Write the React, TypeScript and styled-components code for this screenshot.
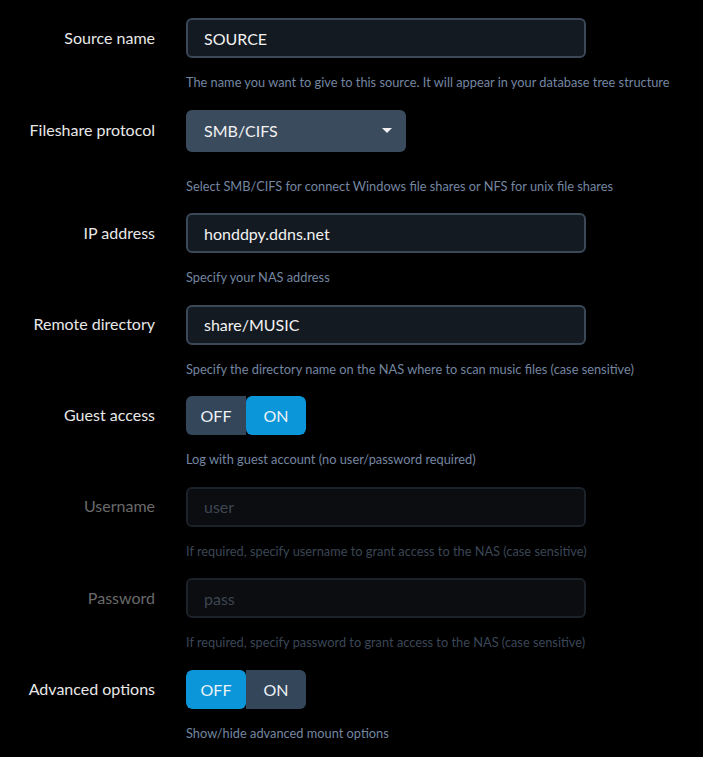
import React from "react";
import styled, { createGlobalStyle, css } from "styled-components";

const Global = createGlobalStyle`
  html, body { margin: 0; padding: 0; background: #000; }
  body { font-family: Lato, "Open Sans", sans-serif; }
`;

const Form = styled.div`
  padding-top: 18px;
  display: grid;
  grid-template-columns: 155px 1fr;
  column-gap: 31px;
  align-items: start;
`;

const Label = styled.div<{ $disabled?: boolean; $h?: number }>`
  height: ${(p) => p.$h ?? 40}px;
  display: flex;
  align-items: center;
  justify-content: flex-end;
  font-size: 16px;
  color: ${(p) => (p.$disabled ? "#6a6a6a" : "#e8e8e8")};
  white-space: nowrap;
  margin-top: -1px;
`;

const Field = styled.div`
  display: flex;
  flex-direction: column;
  align-items: flex-start;
`;

const Input = styled.input<{ $disabled?: boolean }>`
  box-sizing: border-box;
  width: 400px;
  height: 40px;
  border-radius: 6px;
  border: 2px solid ${(p) => (p.$disabled ? "#1c2229" : "#3a4858")};
  background: ${(p) => (p.$disabled ? "#0b0d10" : "#141a21")};
  color: #f2f2f2;
  font-family: Lato, sans-serif;
  font-size: 16px;
  padding: 0 16px;
  outline: none;
  &::placeholder { color: #3e4652; }
`;

const Select = styled.div`
  box-sizing: border-box;
  width: 220px;
  height: 42px;
  margin-bottom: 10px;
  border-radius: 6px;
  background: #3a4b5e;
  color: #f2f2f2;
  font-size: 16px;
  padding: 0 12px 0 18px;
  display: flex;
  align-items: center;
  justify-content: space-between;
`;

const Caret = styled.span`
  width: 0;
  height: 0;
  border-left: 5px solid transparent;
  border-right: 5px solid transparent;
  border-top: 5px solid #f0f0f0;
  margin-right: 2px;
`;

const Toggle = styled.div`
  display: flex;
  height: 39px;
  border-radius: 6px;
  overflow: hidden;
`;

const Seg = styled.div<{ $on: boolean }>`
  width: 60px;
  display: flex;
  align-items: center;
  justify-content: center;
  font-size: 16px;
  color: #eef2f6;
  ${(p) =>
    p.$on
      ? css`background: #0a96d8; border-radius: 6px;`
      : css`background: #34465a;`}
`;

const Help = styled.div<{ $disabled?: boolean }>`
  margin-top: 16px;
  margin-bottom: 19.5px;
  line-height: 16px;
  font-size: 12.8px;
  color: ${(p) => (p.$disabled ? "#3b4656" : "#7486a0")};
  white-space: nowrap;
`;

type Row =
  | { kind: "input"; label: string; value?: string; placeholder?: string; disabled?: boolean; help: string }
  | { kind: "select"; label: string; value: string; help: string }
  | { kind: "toggle"; label: string; on: boolean; help: string };

const rows: Row[] = [
  { kind: "input", label: "Source name", value: "SOURCE", help: "The name you want to give to this source. It will appear in your database tree structure" },
  { kind: "select", label: "Fileshare protocol", value: "SMB/CIFS", help: "Select SMB/CIFS for connect Windows file shares or NFS for unix file shares" },
  { kind: "input", label: "IP address", value: "honddpy.ddns.net", help: "Specify your NAS address" },
  { kind: "input", label: "Remote directory", value: "share/MUSIC", help: "Specify the directory name on the NAS where to scan music files (case sensitive)" },
  { kind: "toggle", label: "Guest access", on: true, help: "Log with guest account (no user/password required)" },
  { kind: "input", label: "Username", placeholder: "user", disabled: true, help: "If required, specify username to grant access to the NAS (case sensitive)" },
  { kind: "input", label: "Password", placeholder: "pass", disabled: true, help: "If required, specify password to grant access to the NAS (case sensitive)" },
  { kind: "toggle", label: "Advanced options", on: false, help: "Show/hide advanced mount options" },
];

export default function App() {
  return (
    <>
      <Global />
      <Form>
        {rows.map((r) => {
          const disabled = r.kind === "input" && !!r.disabled;
          return (
            <React.Fragment key={r.label}>
              <Label $disabled={disabled} $h={r.kind === "select" ? 42 : r.kind === "toggle" ? 39 : 40}>
                {r.label}
              </Label>
              <Field>
                {r.kind === "input" && (
                  <Input
                    $disabled={r.disabled}
                    disabled={r.disabled}
                    defaultValue={r.value}
                    placeholder={r.placeholder}
                  />
                )}
                {r.kind === "select" && (
                  <Select>
                    {r.value}
                    <Caret />
                  </Select>
                )}
                {r.kind === "toggle" && (
                  <Toggle>
                    <Seg $on={!r.on}>OFF</Seg>
                    <Seg $on={r.on}>ON</Seg>
                  </Toggle>
                )}
                <Help $disabled={disabled}>{r.help}</Help>
              </Field>
            </React.Fragment>
          );
        })}
      </Form>
    </>
  );
}
